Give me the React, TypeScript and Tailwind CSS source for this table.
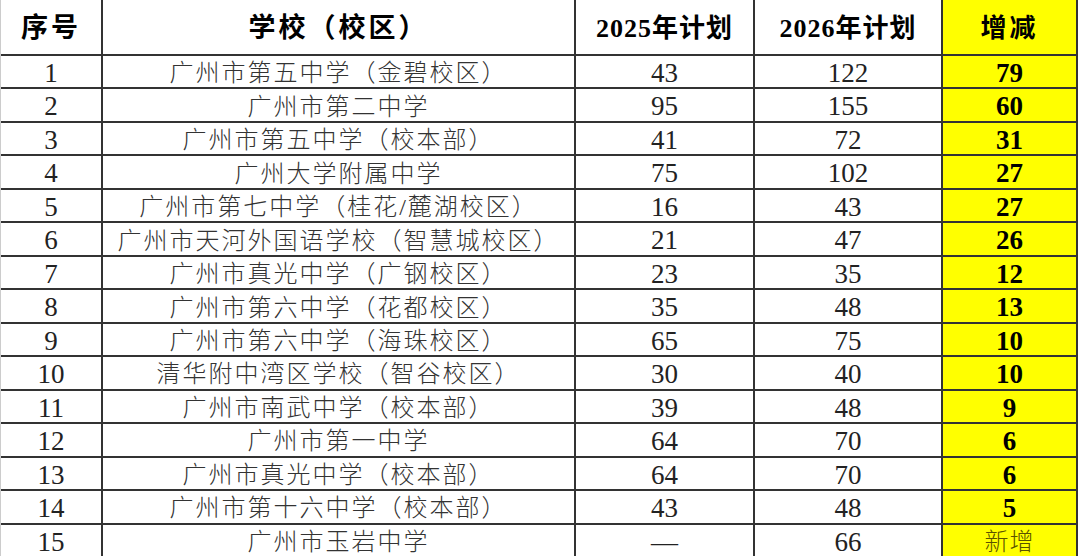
const ROWS = [
  { no: 1, school: '广州市第五中学（金碧校区）', y25: '43', y26: '122', diff: '79' },
  { no: 2, school: '广州市第二中学', y25: '95', y26: '155', diff: '60' },
  { no: 3, school: '广州市第五中学（校本部）', y25: '41', y26: '72', diff: '31' },
  { no: 4, school: '广州大学附属中学', y25: '75', y26: '102', diff: '27' },
  { no: 5, school: '广州市第七中学（桂花/麓湖校区）', y25: '16', y26: '43', diff: '27' },
  { no: 6, school: '广州市天河外国语学校（智慧城校区）', y25: '21', y26: '47', diff: '26' },
  { no: 7, school: '广州市真光中学（广钢校区）', y25: '23', y26: '35', diff: '12' },
  { no: 8, school: '广州市第六中学（花都校区）', y25: '35', y26: '48', diff: '13' },
  { no: 9, school: '广州市第六中学（海珠校区）', y25: '65', y26: '75', diff: '10' },
  { no: 10, school: '清华附中湾区学校（智谷校区）', y25: '30', y26: '40', diff: '10' },
  { no: 11, school: '广州市南武中学（校本部）', y25: '39', y26: '48', diff: '9' },
  { no: 12, school: '广州市第一中学', y25: '64', y26: '70', diff: '6' },
  { no: 13, school: '广州市真光中学（校本部）', y25: '64', y26: '70', diff: '6' },
  { no: 14, school: '广州市第十六中学（校本部）', y25: '43', y26: '48', diff: '5' },
  { no: 15, school: '广州市玉岩中学', y25: '—', y26: '66', diff: '新增' },
]

const base = 'flex items-center justify-center border-r-2 border-[#333] overflow-hidden whitespace-nowrap pt-[3px]'

export default function App() {
  return (
    <div className="w-[1080px] h-[556px] bg-white overflow-hidden font-['Liberation_Serif','Noto_Sans_CJK_SC',serif]">
      <div className="grid grid-cols-[102px_473px_179px_188px_135px] grid-rows-[56px_repeat(15,1fr)] h-[558px] w-[1077px] border-l border-[#ccc]">
        <div className={`${base} border-b-2 text-[27px] font-bold text-black tracking-[3px]`}>序号</div>
        <div className={`${base} border-b-2 text-[27px] font-bold text-black tracking-[3px]`}>学校（校区）</div>
        <div className={`${base} border-b-2 text-[26px] font-bold text-black tracking-[1px]`}>2025年计划</div>
        <div className={`${base} border-b-2 text-[26px] font-bold text-black tracking-[1px]`}>2026年计划</div>
        <div className={`${base} border-b-2 text-[26px] font-bold text-black bg-[#ffff00] tracking-[3px]`}>增减</div>

        {ROWS.map((r) => {
          const cell = `${base} border-b-2`
          return (
            <div key={r.no} className="contents">
              <div className={`${cell} text-[27px] text-[#222]`}>{r.no}</div>
              <div className={`${cell} text-[24px] text-[#333] font-light tracking-[2px]`}>{r.school}</div>
              <div className={`${cell} text-[27px] text-[#222]`}>{r.y25}</div>
              <div className={`${cell} text-[27px] text-[#222]`}>{r.y26}</div>
              {r.diff === '新增' ? (
                <div className={`${cell} text-[24px] text-[#5a5200] font-light bg-[#ffff00] tracking-[1px]`}>{r.diff}</div>
              ) : (
                <div className={`${cell} text-[27px] font-bold text-black bg-[#ffff00]`}>{r.diff}</div>
              )}
            </div>
          )
        })}
      </div>
    </div>
  )
}
